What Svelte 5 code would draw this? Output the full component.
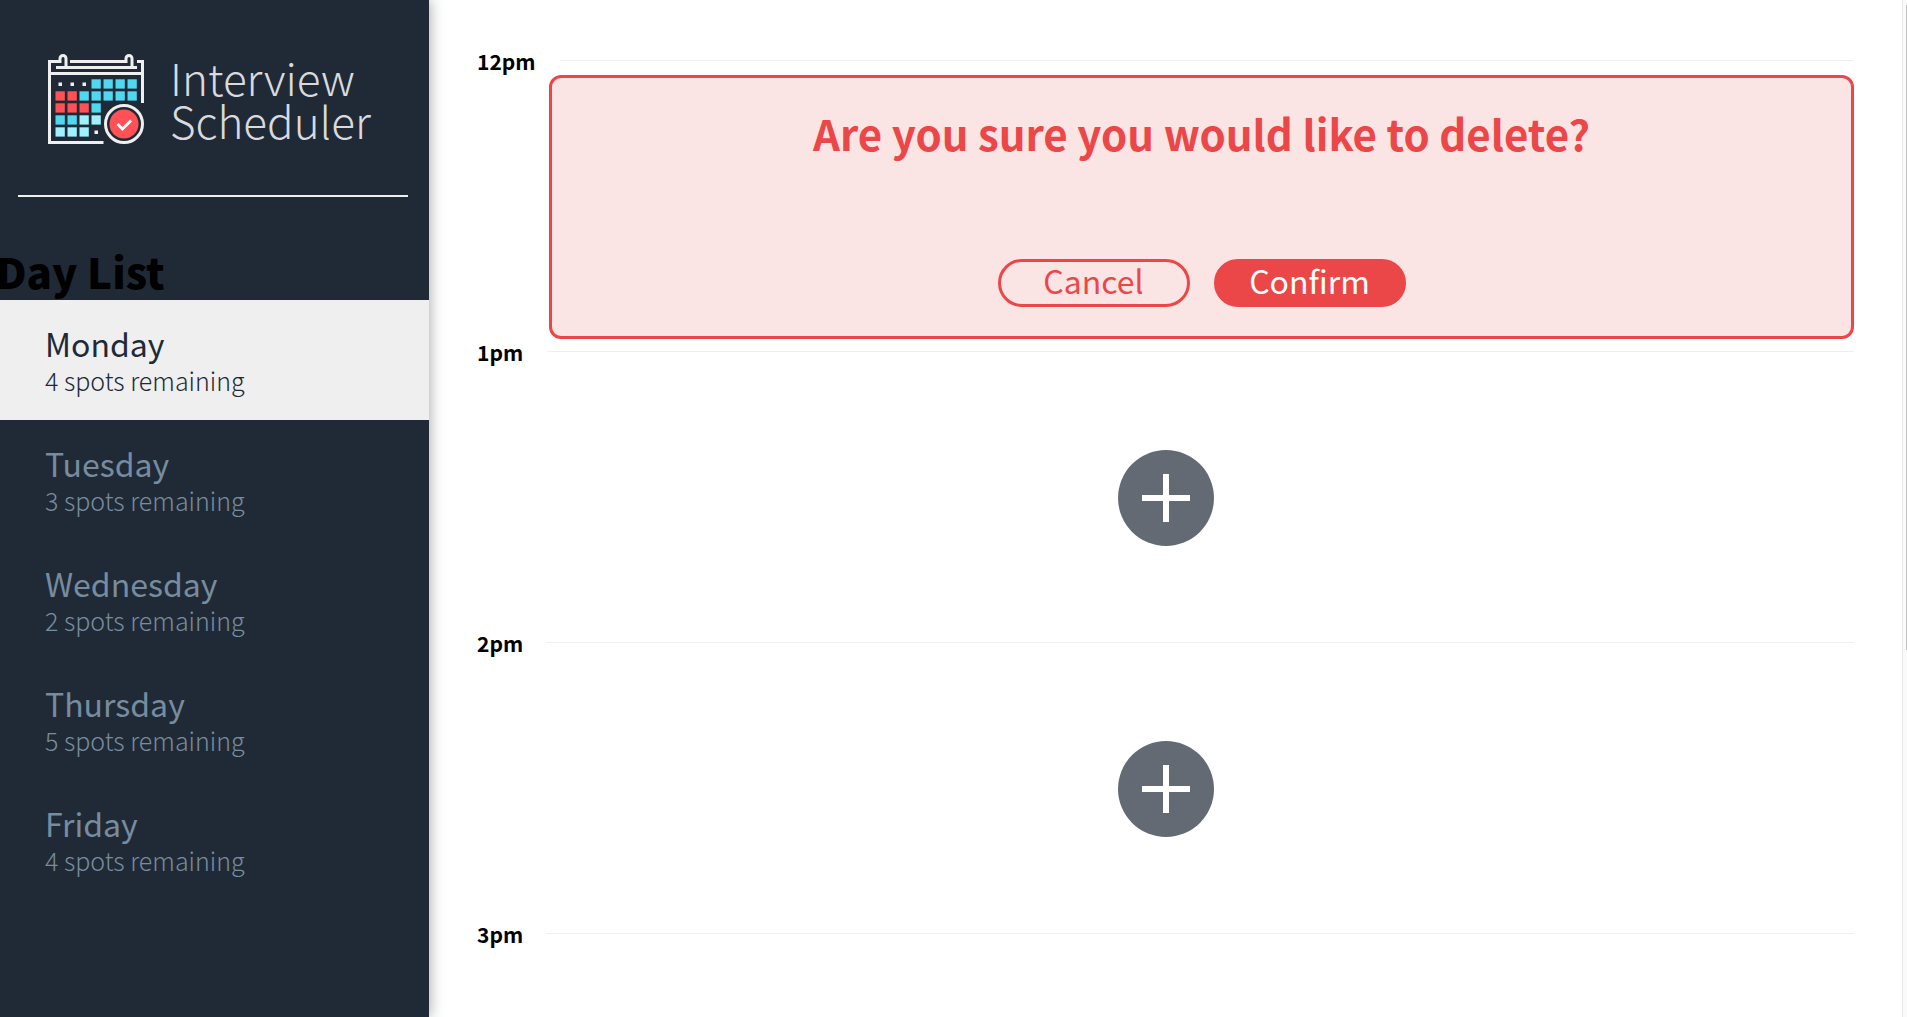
<script lang="ts">
  const days = [
    { name: 'Monday', spots: 4 },
    { name: 'Tuesday', spots: 3 },
    { name: 'Wednesday', spots: 2 },
    { name: 'Thursday', spots: 5 },
    { name: 'Friday', spots: 4 },
  ];
  let selected = $state('Monday');

  const slots = [
    { time: '12pm', mode: 'confirm' },
    { time: '1pm', mode: 'empty' },
    { time: '2pm', mode: 'empty' },
    { time: '3pm', mode: 'empty' },
  ];

  // Calendar cells: c = cyan, p = pale cyan, r = red, d = dot, space = nothing
  const cells = ['dddcccc', 'rrccccc', 'rrrc   ', 'ccpp   ', 'pppd   '].flatMap((row, y) =>
    [...row].map((kind, x) => ({ kind, x: 7 + x * 12, y: 25 + y * 12 })),
  );
</script>

<div class="app">
  <section class="sidebar">
    <div class="logo">
      <svg class="calendar" viewBox="0 0 96 92" aria-hidden="true">
        <g fill="none" stroke="#efefef" stroke-width="3">
          <path d="M55.500 88.500H1.500V7.500H12V4.500a3 3 0 0 1 6 0V13" />
          <path d="M22 7.500H78V4.500a3 3 0 0 1 6 0V13M89 7.500H94.500V49" />
          <path d="M8 13.500H89M1.500 19.500H94.500" />
          <circle cx="76" cy="70" r="18.500" />
        </g>
        {#each cells as cell}
          {#if cell.kind === 'd'}
            <rect class="dot" x={cell.x + 3.5} y={cell.y + 3.5} width="3.500" height="3.500" />
          {:else if cell.kind !== ' '}
            <rect class={cell.kind} x={cell.x + 0.5} y={cell.y + 0.3} width="9.300" height="9.300" />
          {/if}
        {/each}
        <circle class="r" cx="76" cy="70" r="14.500" />
        <path d="M69.500 70l5 5 8.500-8.500" fill="none" stroke="#fff" stroke-width="2.800" />
      </svg>
      <span class="wordmark">Interview<br />Scheduler</span>
    </div>
    <hr />
    <h2>Day List</h2>
    <ul>
      {#each days as day}
        <li>
          <button class="day" class:selected={selected === day.name} onclick={() => (selected = day.name)}>
            <span class="name">{day.name}</span>
            <span class="spots">{day.spots} spots remaining</span>
          </button>
        </li>
      {/each}
    </ul>
  </section>

  <main>
    {#each slots as slot}
      <article>
        <header>
          <h4>{slot.time}</h4>
          <hr />
        </header>
        {#if slot.mode === 'confirm'}
          <div class="confirm">
            <h1>Are you sure you would like to delete?</h1>
            <div class="actions">
              <button class="pill">Cancel</button>
              <button class="pill filled">Confirm</button>
            </div>
          </div>
        {:else}
          <div class="empty">
            <button class="add" aria-label="Add appointment">
              <svg viewBox="0 0 96 96" aria-hidden="true">
                <circle cx="48" cy="48" r="48" fill="#646a74" />
                <path d="M24 48H72M48 24V72" stroke="#fff" stroke-width="6" />
              </svg>
            </button>
          </div>
        {/if}
      </article>
    {/each}
  </main>
  <div class="scrollbar"><div class="thumb"></div></div>
</div>

<style>
  :global(body) {
    background: #fff;
  }
  .app {
    display: flex;
    height: 100vh;
    overflow: hidden;
    font-family: 'Noto Sans CJK SC', 'Noto Sans', sans-serif;
    color: #000;
  }
  h1, h2, h4, ul, hr {
    margin: 0;
    padding: 0;
    border: 0;
  }
  button {
    font: inherit;
    cursor: pointer;
    border: 0;
    padding: 0;
    background: none;
  }
  .sidebar {
    position: relative;
    flex: 0 0 429px;
    background: #202a36;
    box-shadow: 2px 0 12px rgba(32, 42, 54, 0.35);
  }
  .logo {
    display: flex;
    align-items: flex-end;
    gap: 26px;
    padding: 54px 0 0 48px;
  }
  .calendar {
    width: 96px;
    height: 92px;
  }
  .r { fill: #ff5156; }
  .c { fill: #50d8f0; }
  .p { fill: #a0f0ff; }
  .dot { fill: #efefef; }
  .wordmark {
    padding-bottom: 4px;
    font-size: 44px;
    line-height: 43px;
    font-weight: 300;
    color: #d8dade;
  }
  .sidebar > hr {
    height: 2px;
    margin: 49px 21px 0 18px;
    background: #efefef;
  }
  h2 {
    margin: 49px 0 5px -4px;
    font-size: 42px;
    line-height: 49px;
    font-weight: 900;
  }
  ul {
    list-style: none;
  }
  .day {
    display: flex;
    flex-direction: column;
    justify-content: center;
    width: 100%;
    height: 120px;
    padding: 0 0 2px 45px;
    text-align: left;
    color: #788c9f;
  }
  .day.selected {
    background: #efefef;
    color: #202a36;
  }
  .name {
    font-size: 32px;
    line-height: 42px;
    font-weight: 400;
  }
  .spots {
    font-size: 25px;
    line-height: 32px;
    font-weight: 300;
  }
  main {
    flex: 1;
    min-width: 0;
    padding: 45px 48px 0;
  }
  article {
    height: 291px;
  }
  header {
    display: flex;
    align-items: center;
    gap: 24px;
    height: 30px;
  }
  h4 {
    padding-top: 2px;
    font-size: 21px;
    line-height: 28px;
    font-weight: 700;
  }
  header hr {
    flex: 1;
    height: 1px;
    background: #efefef;
  }
  .confirm {
    display: flex;
    flex-direction: column;
    justify-content: space-between;
    align-items: center;
    box-sizing: border-box;
    height: 264px;
    margin-left: 72px;
    padding: 28px 24px 29px;
    border: 3px solid #eb4749;
    border-radius: 12px;
    background: #fbe4e4;
    color: #eb4749;
  }
  h1 {
    font-size: 42px;
    line-height: 54px;
    font-weight: 600;
  }
  .actions {
    display: flex;
    gap: 24px;
  }
  .pill {
    box-sizing: border-box;
    width: 192px;
    height: 48px;
    padding-bottom: 6px;
    border: 3px solid #eb4749;
    border-radius: 24px;
    font-size: 32px;
    line-height: 36px;
    font-weight: 400;
    color: #eb4749;
  }
  .pill.filled {
    background: #eb4749;
    color: #fff;
  }
  .empty {
    display: flex;
    align-items: center;
    justify-content: center;
    height: 264px;
  }
  .add,
  .add svg {
    display: block;
    width: 96px;
    height: 96px;
  }
  .scrollbar {
    box-sizing: border-box;
    flex: 0 0 5px;
    padding: 5px 0 0 3px;
    border-left: 1px solid #e8e8e8;
    background: #fafafa;
  }
  .thumb {
    height: 645px;
    background: #c1c1c1;
  }
</style>
